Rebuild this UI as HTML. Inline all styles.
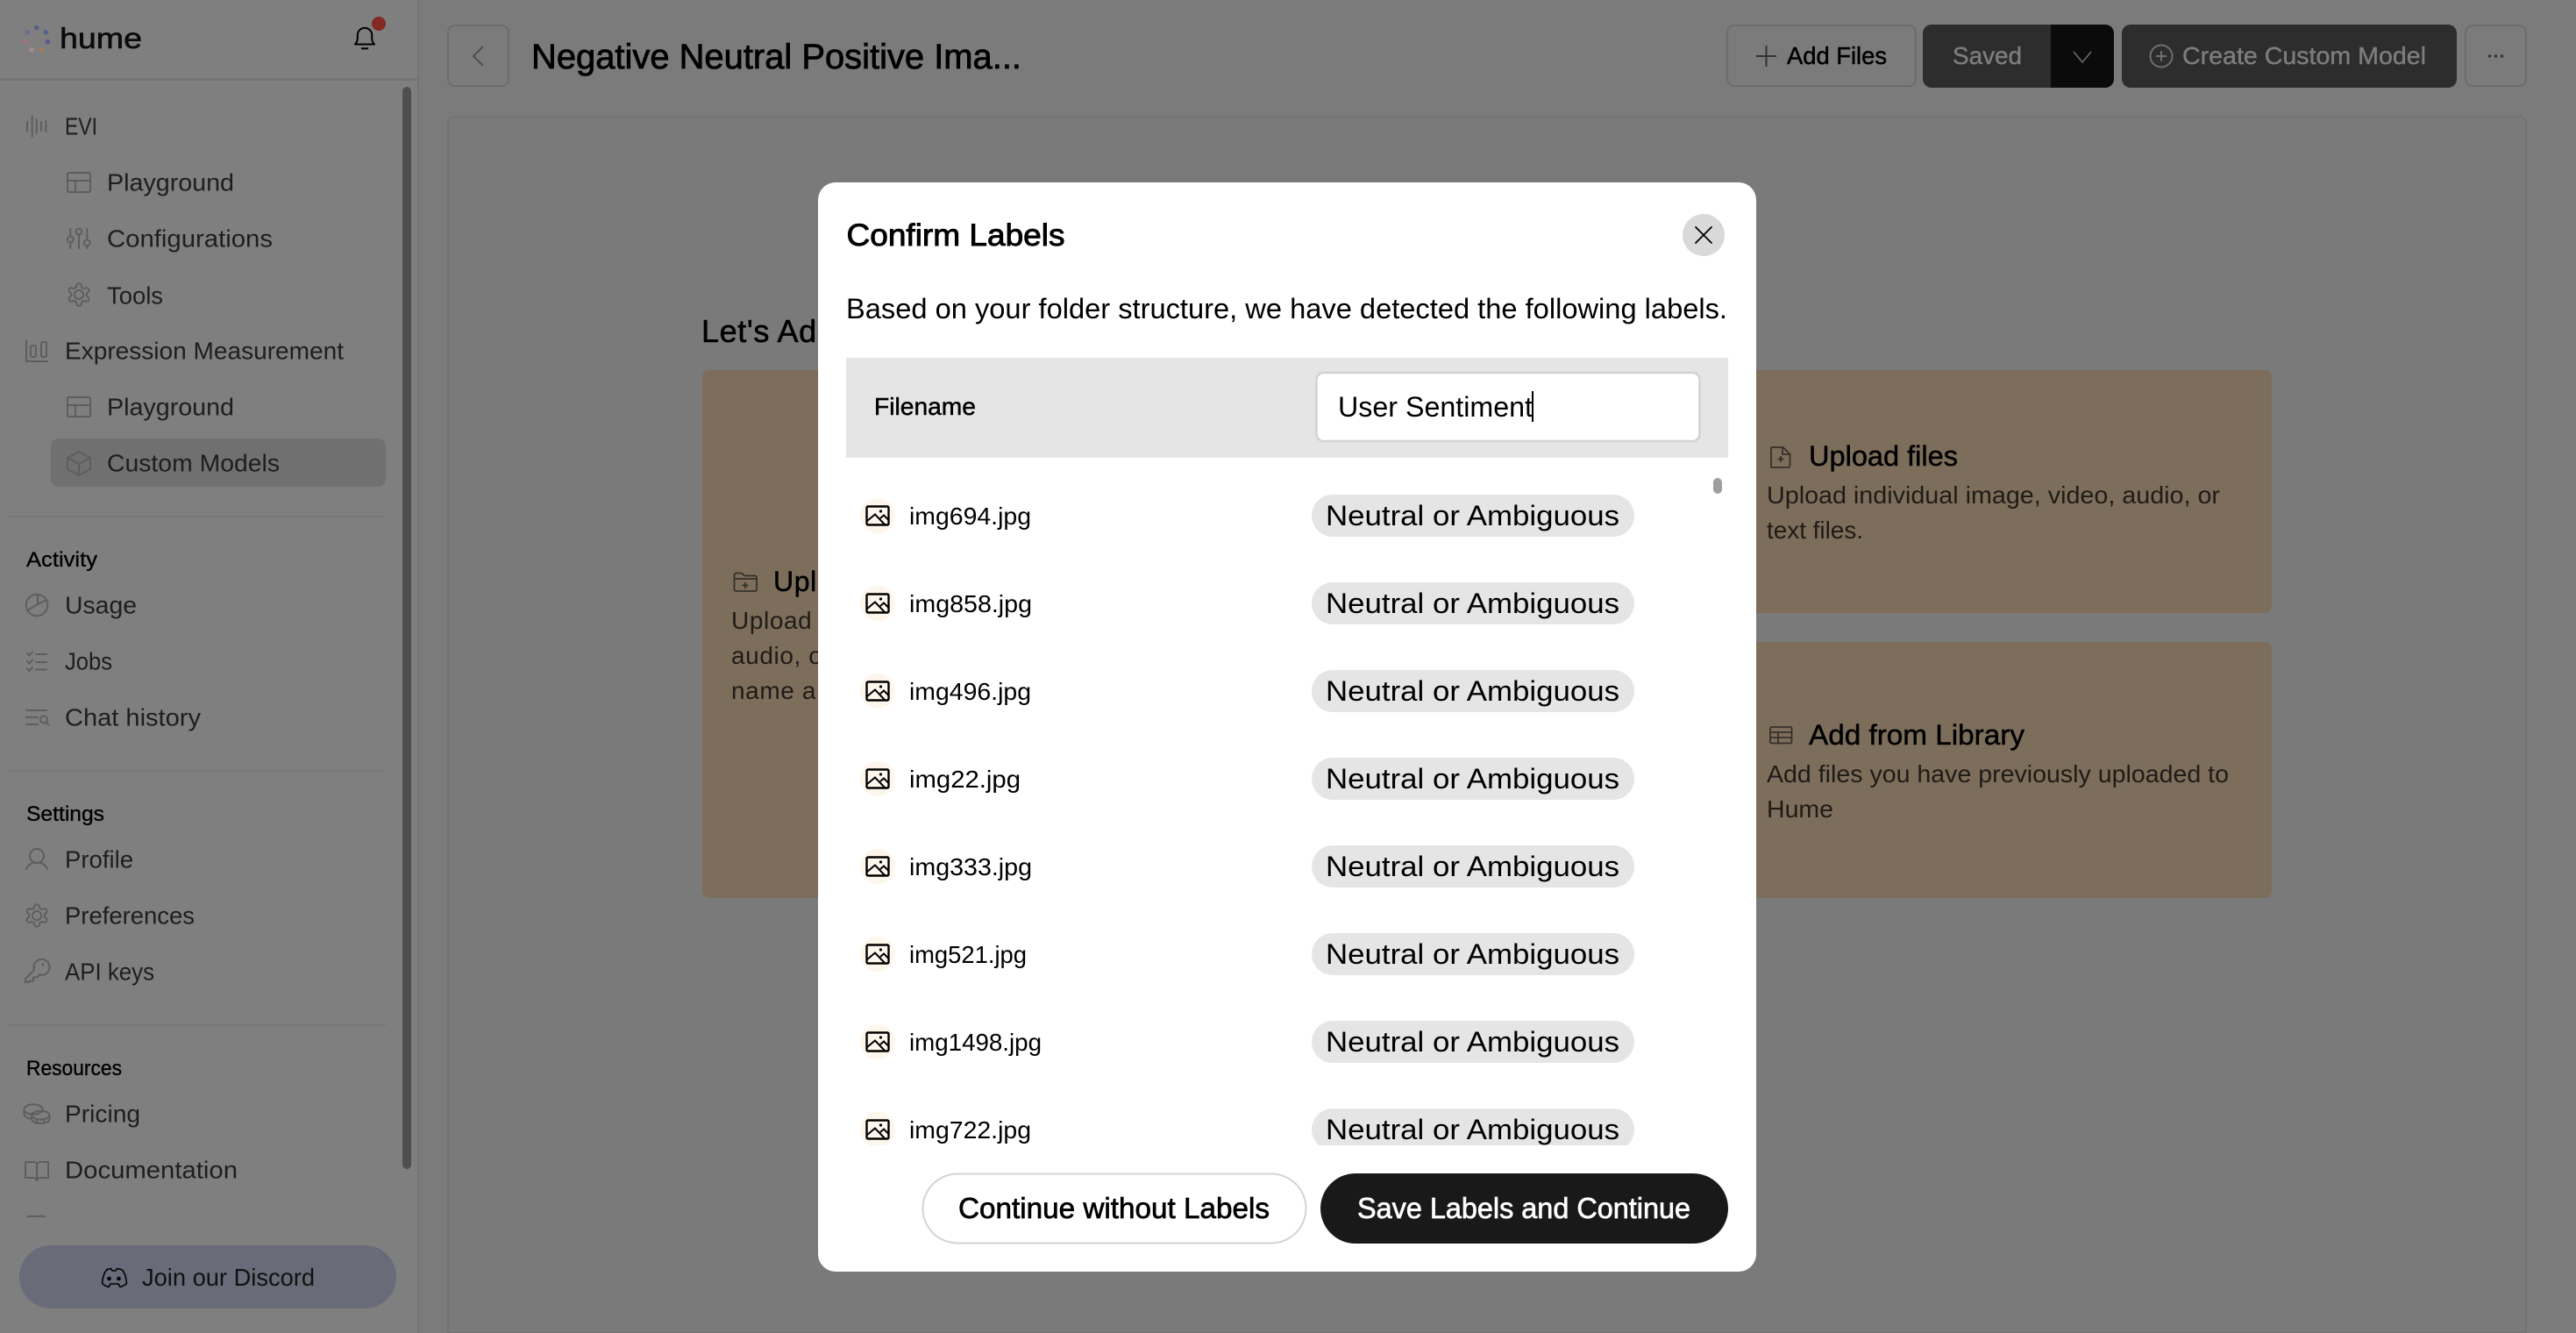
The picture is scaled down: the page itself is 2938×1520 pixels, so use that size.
<!DOCTYPE html>
<html><head><meta charset="utf-8"><title>Confirm Labels</title>
<style>
html,body{margin:0;padding:0;width:2938px;height:1520px;overflow:hidden;background:#7b7b7b}
svg{display:block}
text{font-family:"Liberation Sans",sans-serif;white-space:pre}
.s{font-size:28px;fill:#1e1e1e;transform:translate(-1px,.5px)}
.h{font-size:24px;fill:#000;stroke:#000;stroke-width:.35}
.i{fill:none;stroke:#5e5e5e;stroke-width:2;stroke-linecap:round;stroke-linejoin:round}
.b{fill:none;stroke:#000;stroke-width:2.4;stroke-linejoin:round;stroke-linecap:round}
.f{font-size:28px;fill:#000}
.p{font-size:32px;fill:#000}
.c{font-size:28px;fill:#1f1b17}
.t{font-size:32px;fill:#000;stroke:#000;stroke-width:.5}
</style></head>
<body>
<svg xmlns="http://www.w3.org/2000/svg" width="2938" height="1520" viewBox="0 0 2938 1520">
<defs>
<path id="gear" d="M12.22 2h-.44a2 2 0 0 0-2 2v.18a2 2 0 0 1-1 1.73l-.43.25a2 2 0 0 1-2 0l-.15-.08a2 2 0 0 0-2.73.73l-.22.38a2 2 0 0 0 .73 2.73l.15.1a2 2 0 0 1 1 1.72v.51a2 2 0 0 1-1 1.74l-.15.09a2 2 0 0 0-.73 2.73l.22.38a2 2 0 0 0 2.73.73l.15-.08a2 2 0 0 1 2 0l.43.25a2 2 0 0 1 1 1.73V20a2 2 0 0 0 2 2h.44a2 2 0 0 0 2-2v-.18a2 2 0 0 1 1-1.73l.43-.25a2 2 0 0 1 2 0l.15.08a2 2 0 0 0 2.73-.73l.22-.39a2 2 0 0 0-.73-2.73l-.15-.08a2 2 0 0 1-1-1.74v-.5a2 2 0 0 1 1-1.74l.15-.09a2 2 0 0 0 .73-2.73l-.22-.38a2 2 0 0 0-2.73-.73l-.15.08a2 2 0 0 1-2 0l-.43-.25a2 2 0 0 1-1-1.73V4a2 2 0 0 0-2-2z"/>
<g id="imgi">
<circle cx="0" cy="0" r="20" fill="#fdf6ec"/>
<rect x="-12.5" y="-10.5" width="25" height="21" rx="1.5" class="b"/>
<path d="M-12.5 6.5L-3 -1.5L8 10M3 3L7 -.5L12.5 5" fill="none" stroke="#000" stroke-width="2"/>
<circle cx="3.5" cy="-5" r="1.6" fill="#000"/>
</g>
<g id="layout" class="i"><rect x="0" y="0" width="26" height="22" rx="1.5"/><path d="M0 9H26M9 9V22"/></g>
<clipPath id="sideclip"><rect x="0" y="92" width="456" height="1296"/></clipPath>
<clipPath id="listclip"><rect x="965" y="530" width="1006" height="776"/></clipPath>
</defs>

<!-- page backgrounds -->
<rect width="2938" height="1520" fill="#7b7b7b"/>
<rect width="477" height="1520" fill="#7f7f7f"/>
<rect x="476" y="0" width="2" height="1520" fill="#747474"/>
<rect x="0" y="89" width="477" height="3" fill="#747474"/>

<!-- logo -->
<circle cx="41.7" cy="31.7" r="2.8" fill="#5e5a88"/>
<circle cx="52.3" cy="36.7" r="2.8" fill="#56648f"/>
<circle cx="31.3" cy="36.7" r="2.8" fill="#77688c"/>
<circle cx="28.7" cy="47.7" r="2.8" fill="#a36e8c"/>
<circle cx="54.3" cy="47.7" r="2.8" fill="#5f5590"/>
<circle cx="36" cy="56.7" r="2.8" fill="#a38d8a"/>
<circle cx="47.3" cy="56.7" r="2.8" fill="#a57b55"/>
<text x="68" y="55" font-size="33" textLength="94" lengthAdjust="spacingAndGlyphs" fill="#0b0b0b" stroke="#0b0b0b" stroke-width=".6">hume</text>

<!-- bell -->
<path d="M405 50.5c1.6-1.8 2.8-3.5 2.8-6.5v-4a8.2 8.2 0 0 1 16.4 0v4c0 3 1.2 4.7 2.8 6.5z" fill="none" stroke="#000" stroke-width="2" stroke-linejoin="round"/>
<path d="M412 55.3h8" stroke="#000" stroke-width="2"/>
<circle cx="432" cy="27" r="8" fill="#842a25"/>

<!-- sidebar scrollbar -->
<rect x="459" y="99" width="10" height="1234" rx="5" fill="#4f4f4f"/>

<!-- active item -->
<rect x="58" y="500" width="382" height="55" rx="9" fill="#707070"/>

<!-- sidebar text & icons -->
<g clip-path="url(#sideclip)">
<path class="i" d="M31 139v11M36.7 132v24M41.7 136v16M47 139v10M52.3 138v12"/>
<text class="s" x="75" y="153" textLength="37" lengthAdjust="spacingAndGlyphs">EVI</text>

<use href="#layout" x="77" y="197"/>
<text class="s" x="123" y="217" textLength="145" lengthAdjust="spacingAndGlyphs">Playground</text>

<path class="i" d="M80.3 261v8M80.3 277v6M90 267v16M99.3 261v12M99.3 280v3"/>
<circle class="i" cx="80.3" cy="273" r="3.4"/><circle class="i" cx="90" cy="264" r="3.4"/><circle class="i" cx="99.3" cy="277" r="3.4"/>
<text class="s" x="123" y="281" textLength="189" lengthAdjust="spacingAndGlyphs">Configurations</text>

<g transform="translate(74.76 320.76) scale(1.27)"><use href="#gear" class="i" style="stroke-width:1.55"/><circle cx="12" cy="12" r="4" class="i" style="stroke-width:1.55"/></g>
<text class="s" x="123" y="346" textLength="64" lengthAdjust="spacingAndGlyphs">Tools</text>

<path class="i" d="M30 388V412H54"/><rect class="i" x="35" y="394" width="6" height="13" rx="2"/><rect class="i" x="47" y="390" width="6" height="17" rx="2"/>
<text class="s" x="75" y="409" textLength="318" lengthAdjust="spacingAndGlyphs">Expression Measurement</text>

<use href="#layout" x="77" y="453"/>
<text class="s" x="123" y="473" textLength="145" lengthAdjust="spacingAndGlyphs">Playground</text>

<path class="i" d="M90 515L103 522V535L90 542L77 535V522ZM77 522L90 529L103 522M90 529V542"/>
<text class="s" x="123" y="537" textLength="197" lengthAdjust="spacingAndGlyphs">Custom Models</text>

<rect x="10" y="588" width="430" height="2" fill="#777"/>
<text class="h" x="30" y="646" textLength="81" lengthAdjust="spacingAndGlyphs">Activity</text>

<circle class="i" cx="42" cy="690" r="12.3"/><path class="i" d="M43 678V689L31.5 696M43 689L53 684"/>
<text class="s" x="75" y="699" textLength="82" lengthAdjust="spacingAndGlyphs">Usage</text>

<path class="i" d="M31 745l2.5 2.5 3.5-4M31 754l2.5 2.5 3.5-4M31 762.5l2.5 2.5 3.5-4M41 746H53M41 755H53M41 763.5H53"/>
<text class="s" x="75" y="763" textLength="54" lengthAdjust="spacingAndGlyphs">Jobs</text>

<path class="i" d="M30 810H53M30 818H43M30 826H43M53 824L55.5 826.5"/><circle class="i" cx="50" cy="820.5" r="4"/>
<text class="s" x="75" y="827" textLength="155" lengthAdjust="spacingAndGlyphs">Chat history</text>

<rect x="10" y="878" width="430" height="2" fill="#777"/>
<text class="h" x="30" y="936" textLength="89" lengthAdjust="spacingAndGlyphs">Settings</text>

<circle class="i" cx="42" cy="976" r="8"/><path class="i" d="M30 991c2-5 6.5-7.5 12-7.5s10 2.5 12 7.5"/>
<text class="s" x="75" y="989" textLength="78" lengthAdjust="spacingAndGlyphs">Profile</text>

<g transform="translate(26.76 1028.76) scale(1.27)"><use href="#gear" class="i" style="stroke-width:1.55"/><circle cx="12" cy="12" r="4" class="i" style="stroke-width:1.55"/></g>
<text class="s" x="75" y="1053" textLength="148" lengthAdjust="spacingAndGlyphs">Preferences</text>

<path class="i" d="M38.5 1103a9 9 0 1 1 6.5 8.5l-3 3h-4v4h-4l-1.5 1.500h-3.500v-4l9.500-9.500a9 9 0 0 1 .5-3.500z"/><circle cx="49" cy="1100" r="1.5" fill="#5e5e5e"/>
<text class="s" x="75" y="1117" textLength="102" lengthAdjust="spacingAndGlyphs">API keys</text>

<rect x="10" y="1168" width="430" height="2" fill="#777"/>
<text class="h" x="30" y="1226" textLength="109" lengthAdjust="spacingAndGlyphs">Resources</text>

<ellipse class="i" cx="38" cy="1265" rx="10.5" ry="5.8"/>
<path class="i" d="M27.5 1265v5c0 3 3 5 8 5.800M36 1271c0-1 2-4 11-4 6 0 9.500 2 9.500 4.500s-4 5-10 5-10.500-2-10.500-5.500zM36 1271.500v4c0 3 4 5.500 10.500 5.500s10-2.500 10-5v-4M42 1276v5M50 1276v5"/>
<text class="s" x="75" y="1279" textLength="86" lengthAdjust="spacingAndGlyphs">Pricing</text>

<path class="i" d="M29 1325H39.5L42 1327L44.5 1325H55V1343H44.5L42 1346L39.5 1343H29ZM42 1327V1346"/>
<text class="s" x="75" y="1343" textLength="197" lengthAdjust="spacingAndGlyphs">Documentation</text>

<path class="i" d="M31 1387.5c4-1 8-1 11 0 3-1 6-1 9-.5"/>
</g>

<!-- discord -->
<rect x="22" y="1420" width="430" height="72" rx="36" fill="#696b79"/>
<path d="M122 1447.500l4.500-1 1.500 2.500h4l1.500-2.500 4.500 1c3.500 1.500 5.500 7 6.500 15.500l-.5 1c-2 1.500-4.500 3-7 3.500l-2-3.500h-9l-2 3.500c-2.500-.5-5-2-7-3.500l-.5-1c1-8.500 3-14 6.500-15.500z" fill="none" stroke="#000" stroke-width="1.6" stroke-linejoin="round"/>
<circle cx="124.5" cy="1458" r="2.3" fill="#000"/><circle cx="135.5" cy="1458" r="2.3" fill="#000"/>
<text class="s" x="162" y="1466" textLength="197" lengthAdjust="spacingAndGlyphs" style="fill:#111;transform:none">Join our Discord</text>

<!-- top bar -->
<rect x="511" y="29" width="69" height="69" rx="8" fill="none" stroke="#6c6c6c" stroke-width="2"/>
<path d="M551 53L540 64L551 75" fill="none" stroke="#4a4a4a" stroke-width="1.8"/>
<text x="606" y="78" font-size="40" textLength="559" lengthAdjust="spacingAndGlyphs" fill="#000" stroke="#000" stroke-width=".8">Negative Neutral Positive Ima...</text>

<rect x="1970" y="29" width="215" height="69" rx="8" fill="none" stroke="#6c6c6c" stroke-width="2"/>
<path d="M2014.5 52V76M2003 64H2026" stroke="#333" stroke-width="2"/>
<text x="2038" y="73" font-size="28" textLength="114" lengthAdjust="spacingAndGlyphs" fill="#000" stroke="#000" stroke-width=".5">Add Files</text>

<path d="M2203 28H2339V100H2203a10 10 0 0 1-10-10V38a10 10 0 0 1 10-10z" fill="#2d2d2d"/>
<path d="M2339 28H2401a10 10 0 0 1 10 10V90a10 10 0 0 1-10 10H2339z" fill="#0b0b0b"/>
<text x="2227" y="73" font-size="28" textLength="79" lengthAdjust="spacingAndGlyphs" fill="#7d7d7d" stroke="#7d7d7d" stroke-width=".4">Saved</text>
<path d="M2365 59L2375 71L2385 59" fill="none" stroke="#6f6f6f" stroke-width="1.5"/>

<rect x="2420" y="28" width="382" height="72" rx="10" fill="#2d2d2d"/>
<circle cx="2465" cy="64" r="12.5" fill="none" stroke="#6e6e6e" stroke-width="2"/>
<path d="M2465 58V70M2459 64H2471" stroke="#6e6e6e" stroke-width="2"/>
<text x="2489" y="73" font-size="28" textLength="278" lengthAdjust="spacingAndGlyphs" fill="#7d7d7d" stroke="#7d7d7d" stroke-width=".4">Create Custom Model</text>

<rect x="2812" y="29" width="69" height="69" rx="8" fill="none" stroke="#6c6c6c" stroke-width="2"/>
<circle cx="2839.5" cy="64" r="1.7" fill="#333"/><circle cx="2846.5" cy="64" r="1.7" fill="#333"/><circle cx="2853.5" cy="64" r="1.7" fill="#333"/>

<!-- main panel -->
<path d="M511 1520V141a8 8 0 0 1 8-8H2873a8 8 0 0 1 8 8V1520Z" fill="#7a7a7a" stroke="#737373" stroke-width="2"/>

<!-- background content -->
<text x="800" y="390" font-size="36" fill="#000" stroke="#000" stroke-width=".6" letter-spacing=".6">Let's Add Files</text>

<rect x="801" y="422" width="800" height="602" rx="8" fill="#7d6e5b"/>
<rect x="1900" y="422" width="691" height="277" rx="8" fill="#7d6e5b"/>
<rect x="1900" y="732" width="691" height="292" rx="8" fill="#7d6e5b"/>

<path d="M837.5 655.5a2 2 0 0 1 2-2h6.500l3 3h12a2 2 0 0 1 2 2v13.500a2 2 0 0 1-2 2h-21.500a2 2 0 0 1-2-2zM838 660H863M850 664V671M846.5 667.5H853.5" fill="none" stroke="#35302a" stroke-width="1.8"/>
<text class="t" x="882" y="674" letter-spacing=".6">Upload folder</text>
<text class="c" x="834" y="717" letter-spacing=".6">Upload a folder of image, video,</text>
<text class="c" x="834" y="757" letter-spacing=".6">audio, or text files. Folder</text>
<text class="c" x="834" y="797" letter-spacing=".6">name and labels</text>

<path d="M2021 510H2033.5L2041.5 518V531a2 2 0 0 1-2 2H2021a1 1 0 0 1-1-1V511a1 1 0 0 1 1-1zM2033 510V518H2041.5M2031 520V527M2027.5 523.5H2034.5" fill="none" stroke="#35302a" stroke-width="1.8"/>
<text class="t" x="2063" y="531" textLength="170" lengthAdjust="spacingAndGlyphs">Upload files</text>
<text class="c" x="2015" y="574" textLength="517" lengthAdjust="spacingAndGlyphs">Upload individual image, video, audio, or</text>
<text class="c" x="2015" y="614" textLength="110" lengthAdjust="spacingAndGlyphs">text files.</text>

<rect x="2019" y="829" width="24.5" height="18.5" rx="1.5" fill="none" stroke="#35302a" stroke-width="1.8"/>
<path d="M2019 835H2043.5M2019 841H2043.5M2028 835V847" stroke="#35302a" stroke-width="1.8" fill="none"/>
<text class="t" x="2063" y="849" textLength="246" lengthAdjust="spacingAndGlyphs">Add from Library</text>
<text class="c" x="2015" y="892" textLength="527" lengthAdjust="spacingAndGlyphs">Add files you have previously uploaded to</text>
<text class="c" x="2015" y="932" textLength="76" lengthAdjust="spacingAndGlyphs">Hume</text>

<!-- modal -->
<rect x="933" y="208" width="1070" height="1242" rx="20" fill="#fff"/>
<text x="965.5" y="280" font-size="35" textLength="249" lengthAdjust="spacingAndGlyphs" fill="#000" stroke="#000" stroke-width=".9">Confirm Labels</text>
<circle cx="1943" cy="268" r="24" fill="#d9d9d9"/>
<path d="M1933.5 258.5L1952.5 277.5M1952.5 258.5L1933.5 277.5" stroke="#000" stroke-width="1.8"/>
<text class="p" x="965" y="363" textLength="1005" lengthAdjust="spacingAndGlyphs">Based on your folder structure, we have detected the following labels.</text>

<rect x="965" y="408" width="1006" height="114" fill="#e5e5e5"/>
<text x="997" y="473" font-size="28" textLength="116" lengthAdjust="spacingAndGlyphs" fill="#000" stroke="#000" stroke-width=".5">Filename</text>
<rect x="1501.5" y="425" width="437" height="78" rx="8" fill="#fff" stroke="#d2d2d2" stroke-width="2.5"/>
<text class="p" x="1526" y="475" textLength="222" lengthAdjust="spacingAndGlyphs">User Sentiment</text>
<rect x="1747" y="446" width="2" height="35" fill="#000"/>

<rect x="1954" y="545" width="10" height="18" rx="5" fill="#9e9e9e"/>

<g clip-path="url(#listclip)">
<use href="#imgi" x="1001" y="588"/><text class="f" x="1037" y="598" textLength="139" lengthAdjust="spacingAndGlyphs">img694.jpg</text>
<rect x="1496" y="564" width="368" height="48" rx="24" fill="#e5e5e5"/><text class="p" x="1512" y="599" textLength="335" lengthAdjust="spacingAndGlyphs">Neutral or Ambiguous</text>

<use href="#imgi" x="1001" y="688"/><text class="f" x="1037" y="698" textLength="140" lengthAdjust="spacingAndGlyphs">img858.jpg</text>
<rect x="1496" y="664" width="368" height="48" rx="24" fill="#e5e5e5"/><text class="p" x="1512" y="699" textLength="335" lengthAdjust="spacingAndGlyphs">Neutral or Ambiguous</text>

<use href="#imgi" x="1001" y="788"/><text class="f" x="1037" y="798" textLength="139" lengthAdjust="spacingAndGlyphs">img496.jpg</text>
<rect x="1496" y="764" width="368" height="48" rx="24" fill="#e5e5e5"/><text class="p" x="1512" y="799" textLength="335" lengthAdjust="spacingAndGlyphs">Neutral or Ambiguous</text>

<use href="#imgi" x="1001" y="888"/><text class="f" x="1037" y="898" textLength="127" lengthAdjust="spacingAndGlyphs">img22.jpg</text>
<rect x="1496" y="864" width="368" height="48" rx="24" fill="#e5e5e5"/><text class="p" x="1512" y="899" textLength="335" lengthAdjust="spacingAndGlyphs">Neutral or Ambiguous</text>

<use href="#imgi" x="1001" y="988"/><text class="f" x="1037" y="998" textLength="140" lengthAdjust="spacingAndGlyphs">img333.jpg</text>
<rect x="1496" y="964" width="368" height="48" rx="24" fill="#e5e5e5"/><text class="p" x="1512" y="999" textLength="335" lengthAdjust="spacingAndGlyphs">Neutral or Ambiguous</text>

<use href="#imgi" x="1001" y="1088"/><text class="f" x="1037" y="1098" textLength="134" lengthAdjust="spacingAndGlyphs">img521.jpg</text>
<rect x="1496" y="1064" width="368" height="48" rx="24" fill="#e5e5e5"/><text class="p" x="1512" y="1099" textLength="335" lengthAdjust="spacingAndGlyphs">Neutral or Ambiguous</text>

<use href="#imgi" x="1001" y="1188"/><text class="f" x="1037" y="1198" textLength="151" lengthAdjust="spacingAndGlyphs">img1498.jpg</text>
<rect x="1496" y="1164" width="368" height="48" rx="24" fill="#e5e5e5"/><text class="p" x="1512" y="1199" textLength="335" lengthAdjust="spacingAndGlyphs">Neutral or Ambiguous</text>

<use href="#imgi" x="1001" y="1288"/><text class="f" x="1037" y="1298" textLength="139" lengthAdjust="spacingAndGlyphs">img722.jpg</text>
<rect x="1496" y="1264" width="368" height="48" rx="24" fill="#e5e5e5"/><text class="p" x="1512" y="1299" textLength="335" lengthAdjust="spacingAndGlyphs">Neutral or Ambiguous</text>
</g>

<rect x="1052.5" y="1338.5" width="437" height="79" rx="39.5" fill="#fff" stroke="#d4d4d4" stroke-width="2"/>
<text x="1093" y="1389" font-size="33" textLength="355" lengthAdjust="spacingAndGlyphs" fill="#000" stroke="#000" stroke-width=".7">Continue without Labels</text>
<rect x="1506" y="1338" width="465" height="80" rx="40" fill="#191919"/>
<text x="1548" y="1389" font-size="33" textLength="380" lengthAdjust="spacingAndGlyphs" fill="#fff" stroke="#fff" stroke-width=".7">Save Labels and Continue</text>
</svg>
</body></html>
